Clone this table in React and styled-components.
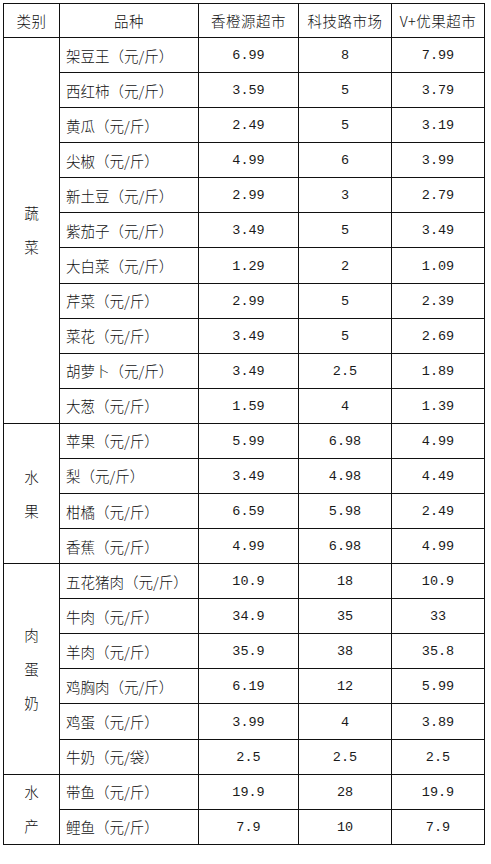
import React from 'react';
import styled, { createGlobalStyle } from 'styled-components';

const groups = [
  {
    name: '蔬菜',
    items: [
      ['架豆王（元/斤）', '6.99', '8', '7.99'],
      ['西红柿（元/斤）', '3.59', '5', '3.79'],
      ['黄瓜（元/斤）', '2.49', '5', '3.19'],
      ['尖椒（元/斤）', '4.99', '6', '3.99'],
      ['新土豆（元/斤）', '2.99', '3', '2.79'],
      ['紫茄子（元/斤）', '3.49', '5', '3.49'],
      ['大白菜（元/斤）', '1.29', '2', '1.09'],
      ['芹菜（元/斤）', '2.99', '5', '2.39'],
      ['菜花（元/斤）', '3.49', '5', '2.69'],
      ['胡萝卜（元/斤）', '3.49', '2.5', '1.89'],
      ['大葱（元/斤）', '1.59', '4', '1.39'],
    ],
  },
  {
    name: '水果',
    items: [
      ['苹果（元/斤）', '5.99', '6.98', '4.99'],
      ['梨（元/斤）', '3.49', '4.98', '4.49'],
      ['柑橘（元/斤）', '6.59', '5.98', '2.49'],
      ['香蕉（元/斤）', '4.99', '6.98', '4.99'],
    ],
  },
  {
    name: '肉蛋奶',
    items: [
      ['五花猪肉（元/斤）', '10.9', '18', '10.9'],
      ['牛肉（元/斤）', '34.9', '35', '33'],
      ['羊肉（元/斤）', '35.9', '38', '35.8'],
      ['鸡胸肉（元/斤）', '6.19', '12', '5.99'],
      ['鸡蛋（元/斤）', '3.99', '4', '3.89'],
      ['牛奶（元/袋）', '2.5', '2.5', '2.5'],
    ],
  },
  {
    name: '水产',
    items: [
      ['带鱼（元/斤）', '19.9', '28', '19.9'],
      ['鲤鱼（元/斤）', '7.9', '10', '7.9'],
    ],
  },
];

const headers = ['类别', '品种', '香橙源超市', '科技路市场', 'V+优果超市'];

const GlobalStyle = createGlobalStyle`
  html, body {
    margin: 0;
    padding: 0;
    background: #fff;
  }
  body {
    padding: 3px 0 0 3px;
    font-family: "Noto Sans CJK SC", "Noto Sans", sans-serif;
    color: #111;
  }
`;

const Sheet = styled.div`
  display: grid;
  grid-template-columns: 56px 139px 100px 93px 93px;
  grid-template-rows: 34px repeat(23, 35.087px);
  width: max-content;
  border-top: 1px solid #111;
  border-left: 1px solid #111;
`;

const Cell = styled.div`
  box-sizing: border-box;
  border-right: 1px solid #111;
  border-bottom: 1px solid #111;
  display: flex;
  align-items: center;
  font-size: 14.5px;
  font-weight: 300;
  white-space: nowrap;
  overflow: hidden;
`;

const HeadCell = styled(Cell)`
  justify-content: center;
  letter-spacing: 0.5px;
`;

const CategoryCell = styled(Cell)`
  grid-column: 1;
  grid-row: span ${props => props.$rows};
  flex-direction: column;
  justify-content: center;
  line-height: 34px;
`;

const NameCell = styled(Cell)`
  grid-column: 2;
  padding-left: 6px;
`;

const PriceCell = styled(Cell)`
  justify-content: center;
  font-family: "Liberation Mono", "DejaVu Sans Mono", monospace;
  font-size: 13.5px;
  font-weight: 400;
  color: #1a1a1a;
  padding-top: 1px;
`;

const App = () => {
  return (
    <>
      <GlobalStyle />
      <Sheet>
        {headers.map(h => (
          <HeadCell key={h}>{h}</HeadCell>
        ))}
        {groups.map(group => (
          <React.Fragment key={group.name}>
            <CategoryCell $rows={group.items.length}>
              {group.name.split('').map((ch, i) => (
                <span key={i}>{ch}</span>
              ))}
            </CategoryCell>
            {group.items.map(([name, a, b, c]) => (
              <React.Fragment key={name}>
                <NameCell>{name}</NameCell>
                <PriceCell>{a}</PriceCell>
                <PriceCell>{b}</PriceCell>
                <PriceCell>{c}</PriceCell>
              </React.Fragment>
            ))}
          </React.Fragment>
        ))}
      </Sheet>
    </>
  );
};

export default App;
